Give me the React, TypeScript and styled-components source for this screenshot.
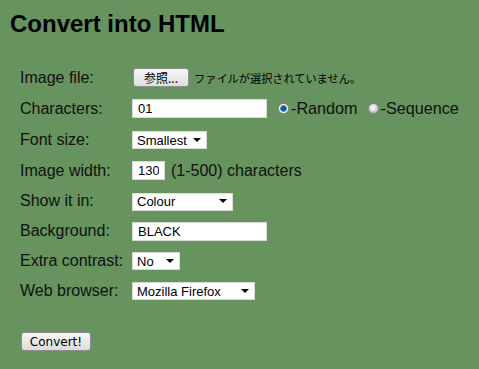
import React from "react";
import styled, { createGlobalStyle } from "styled-components";

const GlobalStyle = createGlobalStyle`
  html, body {
    margin: 0;
    padding: 0;
    background: #66935e;
  }
  body {
    font-family: "Liberation Sans", Arial, sans-serif;
    color: #000;
  }
`;

const Page = styled.div`
  width: 479px;
  height: 369px;
  padding: 10px 0 0 10px;
  box-sizing: border-box;
  overflow: hidden;
`;

const Title = styled.h1`
  margin: 0 0 24px 0;
  font-size: 24px;
  line-height: 28px;
  font-weight: bold;
`;

const Form = styled.div`
  display: grid;
  grid-template-columns: 112px auto;
  grid-template-rows: 31px 31px 31px 31px 30.5px 29.5px 29.5px 30px;
  padding-left: 10px;
  align-items: center;
`;

const Label = styled.div`
  font-size: 16px;
  color: #111;
`;

const Cell = styled.div`
  display: flex;
  align-items: center;
  font-size: 16px;
`;

const FileButton = styled.button`
  width: 56px;
  height: 19px;
  margin-left: 1px;
  padding: 0;
  font-family: "Noto Sans CJK JP", "Liberation Sans", sans-serif;
  font-size: 12px;
  line-height: 16px;
  border: 1px solid #8e8f8f;
  border-radius: 3px;
  background: linear-gradient(#f6f6f6, #dedede);
  color: #000;
`;

const FileNote = styled.span`
  margin-left: 5px;
  font-family: "Noto Sans CJK JP", sans-serif;
  font-size: 11.2px;
`;

const TextInput = styled.input<{ $w: number }>`
  width: ${(p) => p.$w}px;
  height: 19px;
  box-sizing: border-box;
  padding: 0 5px;
  border: 1px solid #d8dcd6;
  background: #fff;
  font-family: "Liberation Sans", Arial, sans-serif;
  font-size: 13px;
  color: #000;
  outline: none;
`;

const Radio = styled.span<{ $on?: boolean }>`
  display: inline-block;
  width: 11px;
  height: 11px;
  border-radius: 50%;
  box-sizing: border-box;
  border: 1px solid #8c8c8c;
  background: ${(p) =>
    p.$on
      ? "radial-gradient(circle, #15548f 0 2px, #3f8fd0 3px, #ffffff 3.8px)"
      : "radial-gradient(circle at 45% 40%, #f2f2f2 0 1.5px, #c4c4c4 5px)"};
  margin: 0 2px 0 ${(p) => (p.$on ? 11 : 10)}px;
`;

const RadioText = styled.span`
  font-size: 16.2px;
  color: #111;
`;

const SelectWrap = styled.div<{ $w: number }>`
  position: relative;
  width: ${(p) => p.$w}px;
  height: 18px;
`;

const Select = styled.select`
  appearance: none;
  width: 100%;
  height: 100%;
  box-sizing: border-box;
  margin: 0;
  padding: 0 0 0 4px;
  border: 1px solid #d8dcd6;
  border-radius: 0;
  background: #fff;
  font-family: "Liberation Sans", Arial, sans-serif;
  font-size: 13px;
  color: #000;
  outline: none;
`;

const Arrow = styled.span`
  position: absolute;
  right: 6px;
  top: 7px;
  width: 0;
  height: 0;
  border-left: 4px solid transparent;
  border-right: 4px solid transparent;
  border-top: 4px solid #000;
  pointer-events: none;
`;

const Note = styled.span`
  margin-left: 6px;
  font-size: 16px;
  color: #111;
`;

const SubmitRow = styled.div`
  padding: 26px 0 0 11px;
`;

const SubmitButton = styled.button`
  width: 70px;
  height: 19px;
  padding: 0;
  font-family: "DejaVu Sans", "Liberation Sans", sans-serif;
  font-size: 12px;
  border: 1px solid #8e8f8f;
  border-radius: 3px;
  background: linear-gradient(#f6f6f6, #dcdcdc);
  color: #000;
`;

const Dropdown = ({ w, value, options }: { w: number; value: string; options: string[] }) => (
  <SelectWrap $w={w}>
    <Select defaultValue={value}>
      {options.map((o) => (
        <option key={o}>{o}</option>
      ))}
    </Select>
    <Arrow />
  </SelectWrap>
);

export default function App() {
  return (
    <>
      <GlobalStyle />
      <Page>
        <Title>Convert into HTML</Title>
        <Form>
          <Label>Image file:</Label>
          <Cell>
            <FileButton>参照...</FileButton>
            <FileNote>ファイルが選択されていません。</FileNote>
          </Cell>

          <Label>Characters:</Label>
          <Cell>
            <TextInput $w={135} defaultValue="01" />
            <Radio $on />
            <RadioText>-Random</RadioText>
            <Radio />
            <RadioText>-Sequence</RadioText>
          </Cell>

          <Label>Font size:</Label>
          <Cell>
            <Dropdown w={75} value="Smallest" options={["Smallest", "Small", "Medium", "Large"]} />
          </Cell>

          <Label>Image width:</Label>
          <Cell>
            <TextInput $w={33} defaultValue="130" />
            <Note>(1-500) characters</Note>
          </Cell>

          <Label>Show it in:</Label>
          <Cell>
            <Dropdown w={101} value="Colour" options={["Colour", "Black and white"]} />
          </Cell>

          <Label>Background:</Label>
          <Cell>
            <TextInput $w={135} defaultValue="BLACK" />
          </Cell>

          <Label>Extra contrast:</Label>
          <Cell>
            <Dropdown w={48} value="No" options={["No", "Yes"]} />
          </Cell>

          <Label>Web browser:</Label>
          <Cell>
            <Dropdown w={123} value="Mozilla Firefox" options={["Mozilla Firefox", "Internet Explorer", "Opera"]} />
          </Cell>
        </Form>
        <SubmitRow>
          <SubmitButton>Convert!</SubmitButton>
        </SubmitRow>
      </Page>
    </>
  );
}
